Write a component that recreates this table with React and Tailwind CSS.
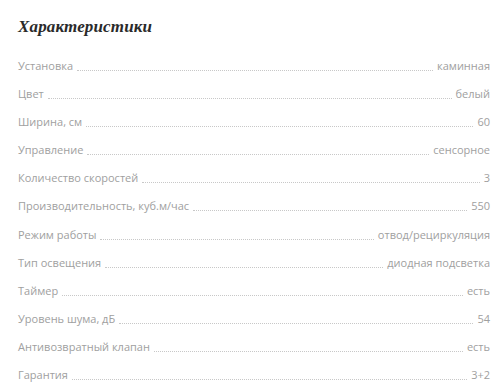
import React from "react";

const specs = [
  ["Установка", "каминная"],
  ["Цвет", "белый"],
  ["Ширина, см", "60"],
  ["Управление", "сенсорное"],
  ["Количество скоростей", "3"],
  ["Производительность, куб.м/час", "550"],
  ["Режим работы", "отвод/рециркуляция"],
  ["Тип освещения", "диодная подсветка"],
  ["Таймер", "есть"],
  ["Уровень шума, дБ", "54"],
  ["Антивозвратный клапан", "есть"],
  ["Гарантия", "3+2"],
];

export default function App() {
  return (
    <div className="min-h-screen bg-white px-[18px] pt-[15px] pr-[10px]">
      <h2 className="font-['Liberation_Serif',serif] text-[17px] font-bold italic leading-[24px] tracking-[0.15px] text-[#2a2a2a]">
        Характеристики
      </h2>
      <div className="mt-[19px] font-['Open_Sans',sans-serif] text-[11px] text-[#a0a0a0]">
        {specs.map(([label, value]) => (
          <div key={label} className="flex h-[28.1px] items-start leading-[16px]">
            <span>{label}</span>
            <span className="mx-[4px] h-[13px] flex-1 border-b border-dotted border-[#c8c8c8]" />
            <span>{value}</span>
          </div>
        ))}
      </div>
    </div>
  );
}
